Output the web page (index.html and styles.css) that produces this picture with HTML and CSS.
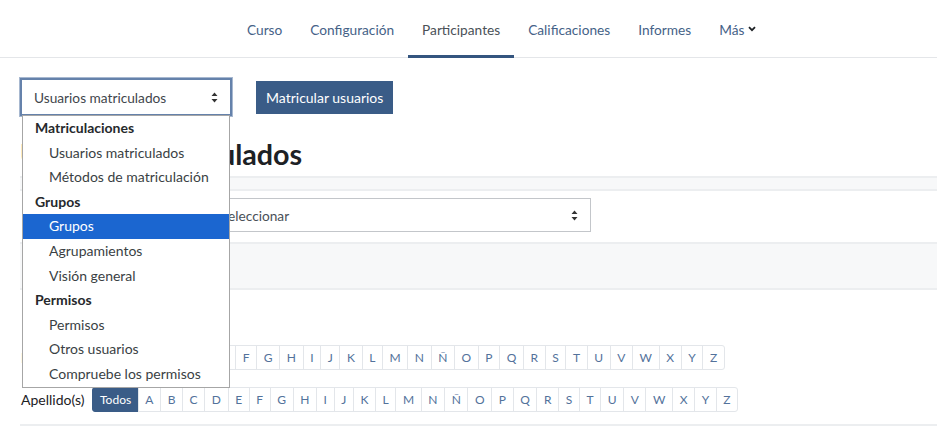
FILE: index.html
```html
<!DOCTYPE html>
<html lang="es">
<head>
    <meta charset="UTF-8">
    <meta name="viewport" content="width=device-width, initial-scale=1.0">
    <title>Participantes</title>
    <link rel="stylesheet" href="styles.css">
</head>
<body>
    <nav class="course-nav">
        <a href="#">Curso</a>
        <a href="#">Configuración</a>
        <a href="#" class="active">Participantes</a>
        <a href="#">Calificaciones</a>
        <a href="#">Informes</a>
        <a href="#" class="more">Más
            <svg width="8" height="6" viewBox="0 0 8 6"><path d="M1 1.2 L4 4.2 L7 1.2" fill="none" stroke="#1d2125" stroke-width="1.8"/></svg>
        </a>
    </nav>

<section class="page">
    <div class="toolbar">
        <div class="select-wrap">
            <div class="fake-select focused">
                <span>Usuarios matriculados</span>
                <svg class="caret" width="7" height="11" viewBox="0 0 7 11"><path d="M3.5 0.5 L6.5 4 L0.5 4 Z M3.5 10.5 L6.5 7 L0.5 7 Z" fill="#333"/></svg>
            </div>
            <!-- opened native list, drawn by hand -->
            <ul class="select-menu">
                <li class="group">Matriculaciones</li>
                <li>Usuarios matriculados</li>
                <li>Métodos de matriculación</li>
                <li class="group">Grupos</li>
                <li class="selected">Grupos</li>
                <li>Agrupamientos</li>
                <li>Visión general</li>
                <li class="group">Permisos</li>
                <li>Permisos</li>
                <li>Otros usuarios</li>
                <li>Compruebe los permisos</li>
            </ul>
        </div>
        <button class="btn-primary" type="button">Matricular usuarios</button>
    </div>

    <h2 class="page-title">Usuarios matriculados</h2>

    <div class="band thin"></div>

    <div class="filter-row">
        <span class="filter-label">Coincidir</span>
        <div class="fake-select wide">
            <span>Seleccionar</span>
            <svg class="caret" width="7" height="11" viewBox="0 0 7 11"><path d="M3.5 0.5 L6.5 4 L0.5 4 Z M3.5 10.5 L6.5 7 L0.5 7 Z" fill="#333"/></svg>
        </div>
    </div>

    <div class="band tall"></div>

    <div class="initials" id="initialsFirst">
        <span class="initials-label">Nombre</span>
    </div>
    <div class="initials" id="initialsLast">
        <span class="initials-label">Apellido(s)</span>
    </div>

    <hr class="bottom-rule">
</section>

<script>
    // Build both rows of initials
    const letters = ['A','B','C','D','E','F','G','H','I','J','K','L','M','N','Ñ','O','P','Q','R','S','T','U','V','W','X','Y','Z'];

    function buildRow(rowId) {
        const row = document.getElementById(rowId);
        const bar = document.createElement('div');
        bar.classList.add('letter-bar');

        const all = document.createElement('a');
        all.href = '#';
        all.textContent = 'Todos';
        all.classList.add('letter', 'active');
        bar.appendChild(all);

        letters.forEach(letter => {
            const a = document.createElement('a');
            a.href = '#';
            a.textContent = letter;
            a.classList.add('letter');
            bar.appendChild(a);
        });
        row.appendChild(bar);
    }

    buildRow('initialsFirst');
    buildRow('initialsLast');
</script>
</body>
</html>
```

FILE: styles.css
```css
body {
    font-family: Lato, "Open Sans", sans-serif;
    font-size: 14px;
    color: #1d2125;
    margin: 0;
    padding: 0;
    background-color: #fff;
}
.course-nav {
    display: flex;
    height: 57px;
    padding-left: 233px;
    border-bottom: 1px solid #e4e6e9;
}
.course-nav a {
    display: flex;
    align-items: center;
    gap: 4px;
    padding: 3px 14px 0;
    font-size: 13.7px;
    color: #456287;
    text-decoration: none;
    border-bottom: 3px solid transparent;
    margin-bottom: -1px;
}
.course-nav a.active {
    color: #4a5157;
    border-bottom-color: #34557f;
}
.page {
    padding: 20px 0 0 20px;
}
.toolbar {
    display: flex;
    align-items: center;
    gap: 24px;
}
.select-wrap {
    position: relative;
}
.fake-select {
    display: flex;
    align-items: center;
    justify-content: space-between;
    box-sizing: border-box;
    height: 38px;
    padding: 0 12px;
    font-size: 13.7px;
    color: #495057;
    background-color: #fff;
    border: 1px solid #c3c6ca;
}
.fake-select.focused {
    width: 212px;
    border: 2px solid #6582ab;
    box-shadow: 0 0 0 1px #a7b8d0;
    color: #3f464c;
}
.fake-select.wide {
    width: 383px;
    height: 34px;
    padding-left: 12px;
}
.select-menu {
    position: absolute;
    top: 37px;
    left: 2px;
    width: 206px;
    margin: 0;
    padding: 0;
    list-style: none;
    background-color: #fff;
    border: 1px solid #a6a6a6;
    z-index: 5;
}
.select-menu li {
    height: 24.6px;
    line-height: 24.6px;
    padding-left: 26px;
    font-size: 14px;
    color: #3a3f44;
    white-space: nowrap;
}
.select-menu li.group {
    padding-left: 12px;
    font-weight: bold;
    color: #26292c;
}
.select-menu li.selected {
    background-color: #1b66d0;
    color: #fff;
}
.btn-primary {
    height: 33px;
    padding: 0 10px;
    font-family: inherit;
    font-size: 14px;
    color: #fff;
    background-color: #3a5c87;
    border: none;
    border-radius: 0;
}
.page-title {
    margin: 21px 0 5px;
    font-size: 28.7px;
    line-height: 34px;
    font-weight: bold;
    color: #1d2125;
}
.band {
    background-color: #f7f8f9;
    border-top: 2px solid #eceef0;
    border-bottom: 2px solid #eceef0;
}
.band.thin {
    height: 11px;
}
.band.tall {
    height: 44px;
}
.filter-row {
    display: flex;
    align-items: center;
    gap: 16px;
    margin: 7px 0 10px 117px;
}
.filter-label {
    color: #495057;
}
.initials {
    display: flex;
    align-items: center;
    margin-top: 55px;
}
.initials + .initials {
    margin-top: 17px;
}
.initials-label {
    margin-right: 8px;
    margin-left: 1px;
    font-size: 14px;
    color: #1d2125;
}
.letter-bar {
    display: flex;
}
.letter {
    display: flex;
    align-items: center;
    height: 23px;
    padding: 0 6.6px;
    font-size: 12px;
    color: #53729b;
    text-decoration: none;
    border: 1px solid #e3e6ea;
    margin-left: -1px;
}
.letter:last-child {
    border-radius: 0 3px 3px 0;
}
.letter.active {
    margin-left: 0;
    color: #fff;
    background-color: #3a5c87;
    border-color: #3a5c87;
    border-radius: 3px 0 0 3px;
}
.bottom-rule {
    margin: 12px 0 0;
    border: none;
    border-top: 2px solid #eceef0;
}
```
